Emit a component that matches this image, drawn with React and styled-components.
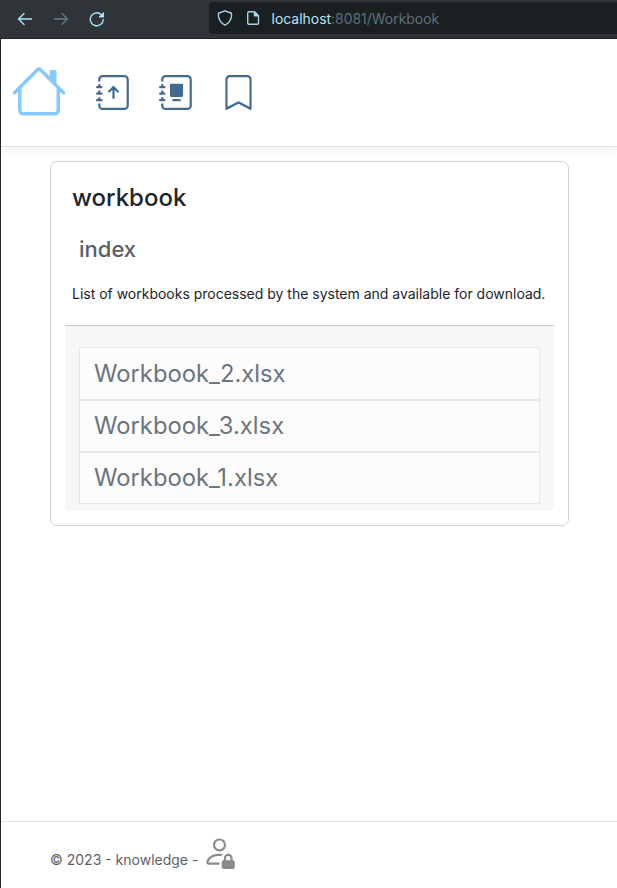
import React from 'react';
import styled, { createGlobalStyle } from 'styled-components';
import { BsHouse, BsJournalArrowUp, BsJournalAlbum, BsBookmark, BsPersonLock } from 'react-icons/bs';

const GlobalStyle = createGlobalStyle`
  * { box-sizing: border-box; }
  body { margin: 0; background: #fff; font-family: Inter, sans-serif; font-size: 14px; color: #212529; }
  h1, h2, p, ul { margin: 0; padding: 0; font-weight: 400; }
  svg { display: block; flex: none; }
`;

const Window = styled.div`
  display: flex;
  flex-direction: column;
  height: 888px;
  overflow: hidden;
`;

const BrowserBar = styled.div`
  display: flex;
  justify-content: space-between;
  flex: none;
  height: 39px;
  padding-left: 17px;
  background: #2f3438;
  border-bottom: 1px solid #1d2027;
`;

const BrowserButtons = styled.div`
  display: flex;
  align-items: center;
  gap: 20px;
  color: #aee3f9;
`;

const BrowserIcon = styled.svg`
  width: 16px;
  height: 16px;
  fill: none;
  stroke: currentColor;
  stroke-width: 1.4;
  stroke-linecap: round;
  stroke-linejoin: round;
  opacity: ${(p) => (p.$dim ? 0.4 : 1)};
`;

const AddressBar = styled.div`
  display: flex;
  align-items: center;
  gap: 12px;
  width: 408px;
  height: 32px;
  margin-top: 2px;
  padding-left: 8px;
  background: #1a1f22;
  border-radius: 4px 0 0 4px;
  color: #a6d4e8;
`;

const Url = styled.span`
  margin-left: -1.5px;
  padding-top: 1px;
  font-size: 13.95px;
  color: #5f727c;
`;

const Host = styled.span`
  color: #b5e4f8;
`;

const Page = styled.div`
  display: flex;
  flex-direction: column;
  flex: 1;
  border-left: 1px solid #25282e;
`;

const Header = styled.header`
  display: flex;
  align-items: center;
  flex: none;
  height: 108px;
  padding-left: 10px;
  border-bottom: 1px solid #dee2e6;
  box-shadow: 0 4px 11px rgba(0, 0, 0, 0.05);
  color: #436a90;
`;

const HomeLink = styled.a`
  margin: -3px 29px 0 0;
  color: #86caff;
`;

const NavLinks = styled.nav`
  display: flex;
  gap: 27.6px;
`;

const Main = styled.main`
  flex: 1;
  padding: 14px 48px 0 49px;
`;

const Card = styled.section`
  height: 365px;
  padding: 21px 14px 14px;
  border: 1px solid #cfd0d1;
  border-radius: 7px;
`;

const Title = styled.h1`
  padding-left: 7px;
  font-size: 24px;
  line-height: 29px;
  font-weight: 500;
`;

const Subtitle = styled.h2`
  margin-top: 24px;
  padding-left: 14px;
  font-size: 22px;
  line-height: 27px;
  font-weight: 500;
  color: #5c6065;
`;

const Description = styled.p`
  margin: 20px 0 21px;
  padding-left: 7px;
  font-size: 13.99px;
  line-height: 21px;
  white-space: nowrap;
`;

const ListPanel = styled.div`
  height: 186px;
  padding: 21px 14px 7px;
  background: #f7f7f7;
  border-top: 1px solid #c8c8c8;
  border-radius: 0 0 5px 5px;
`;

const FileList = styled.ul`
  height: 157px;
  list-style: none;
  border: 1px solid #e7e9eb;
  background: #fcfcfc;
`;

const FileRow = styled.li`
  height: 52px;
  padding-left: 14px;
  font-size: 23.8px;
  line-height: 50px;
  color: #6c757d;

  &:first-child {
    height: 53px;
    padding-top: 1px;
  }

  &:not(:last-child) {
    border-bottom: 2px solid #e7eaed;
  }

  &:last-child {
    height: 50px;
  }
`;

const Footer = styled.footer`
  display: flex;
  flex: none;
  height: 67px;
  padding: 12px 0 0 49px;
  border-top: 1px solid #dee2e6;
  color: #5c6065;
`;

const Copyright = styled.span`
  margin: 17px 4px 0 0;
  line-height: 17px;
`;

const LoginLink = styled.a`
  color: #8a8a8a;
`;

const files = ['Workbook_2.xlsx', 'Workbook_3.xlsx', 'Workbook_1.xlsx'];

export default function App() {
  return (
    <Window>
      <GlobalStyle />
      <BrowserBar>
        <BrowserButtons>
          <BrowserIcon viewBox="0 0 16 16">
            <path d="M14.5 8H1.5M7 2.5L1.5 8L7 13.5" />
          </BrowserIcon>
          <BrowserIcon viewBox="0 0 16 16" $dim>
            <path d="M1.5 8H14.5M9 2.5L14.5 8L9 13.5" />
          </BrowserIcon>
          <BrowserIcon viewBox="0 0 16 16">
            <path d="M14.3 8.5A6.5 6.5 0 1 1 12.4 3.7" />
            <path d="M14.5 2V6H10.5Z" fill="currentColor" strokeWidth="1" />
          </BrowserIcon>
        </BrowserButtons>
        <AddressBar>
          <BrowserIcon viewBox="0 0 16 16">
            <path d="M8 .8L14 3C14.8 3.4 14.7 4.2 14.6 5.5C14.2 9.5 12.3 13 8 15.2C3.7 13 1.8 9.5 1.4 5.5C1.3 4.2 1.2 3.4 2 3Z" />
          </BrowserIcon>
          <BrowserIcon viewBox="0 0 16 16">
            <path d="M4 1.7H9.5L13.5 5.7V13Q13.5 14.3 12.2 14.3H4Q2.7 14.3 2.7 13V3Q2.7 1.7 4 1.7Z" />
            <path d="M9.5 2V5.7H13.2Z" fill="currentColor" />
          </BrowserIcon>
          <Url><Host>localhost</Host>:8081/Workbook</Url>
        </AddressBar>
      </BrowserBar>
      <Page>
        <Header>
          <HomeLink><BsHouse size={56} /></HomeLink>
          <NavLinks>
            <BsJournalArrowUp size={35} />
            <BsJournalAlbum size={35} />
            <BsBookmark size={35} />
          </NavLinks>
        </Header>
        <Main>
          <Card>
            <Title>workbook</Title>
            <Subtitle>index</Subtitle>
            <Description>List of workbooks processed by the system and available for download.</Description>
            <ListPanel>
              <FileList>
                {files.map((name) => (
                  <FileRow key={name}>{name}</FileRow>
                ))}
              </FileList>
            </ListPanel>
          </Card>
        </Main>
        <Footer>
          <Copyright>© 2023 - knowledge -</Copyright>
          <LoginLink><BsPersonLock size={35} /></LoginLink>
        </Footer>
      </Page>
    </Window>
  );
}
